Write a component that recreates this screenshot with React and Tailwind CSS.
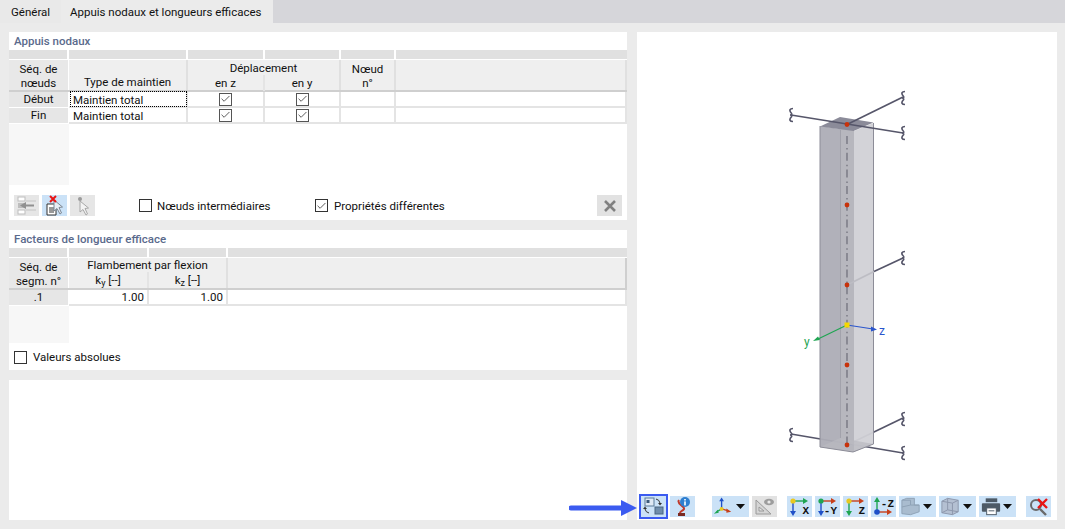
import { Check } from 'lucide-react'

const FONT = 'font-["Roboto",sans-serif]'

const CheckBox = ({ checked, dark }) => (
  <span
    className={`flex items-center justify-center w-[13px] h-[13px] border bg-white ${
      dark ? 'border-[#333333]' : 'border-[#555555]'
    }`}
  >
    {checked && <Check size={12} strokeWidth={1.9} className="text-[#444444]" />}
  </span>
)

const Head = ({ className = '', children }) => (
  <div className={`flex items-end justify-center bg-[#efefef] border-r-2 border-[#e0e0e0] ${className}`}>
    {children}
  </div>
)

const Band = ({ cols }) => (
  <div className="flex h-[9px] mb-px">
    {cols.map((w, i) => (
      <div key={i} style={{ width: w }} className="bg-[#e0e0e0] border-r-2 border-white last:border-r-0 last:flex-1" />
    ))}
  </div>
)

const Cell = ({ className = '', children }) => (
  <div className={`flex items-center border-r-2 border-b-2 border-[#e4e4e4] bg-white ${className}`}>{children}</div>
)

const RowLabel = ({ children }) => (
  <div className="flex items-center justify-center w-[60px] h-[16px] pb-[1px] bg-[#e6e6e6] border-r border-white border-b border-b-white">
    {children}
  </div>
)

const Squiggle = ({ x, y }) => (
  <path
    d={`M${x + 2} ${y - 6.5} c-3.5 0 -3.5 2 -2.5 3.5 c2 2 1.5 3 -0.5 3 c2 0 2.5 1 0.5 3 c-1 1.5 -1 3.5 2.5 3.5`}
    fill="none"
    stroke="#56566a"
    strokeWidth="1.7"
  />
)

const Column = () => (
  <svg viewBox="637 32 420 464" className="w-[420px] h-[464px] block">
    <line x1="847" y1="445" x2="903" y2="418" stroke="#56566a" strokeWidth="1.7" />
    <line x1="791" y1="434" x2="903" y2="453" stroke="#56566a" strokeWidth="1.7" />
    <polygon points="820,126 854,131 854,452 820,447" fill="#adadb6" fillOpacity="0.95" />
    <polygon points="854,131 873.5,123 873.5,444 854,452" fill="#d1d1d6" fillOpacity="0.95" />
    <polygon points="840.5,123 854,125 854,445 840.5,440" fill="#b7b7be" />
    <polygon points="820,447 840,438 873.5,444 853,452" fill="#b9b9c0" opacity="0.7" />
    <path d="M820 126 V447 L853 452 L873.5 444 V123" fill="none" stroke="#8d8d98" strokeWidth="1" />
    <line x1="840.5" y1="130" x2="840.5" y2="438" stroke="#a2a2ab" strokeWidth="1" />
    <polygon points="820,126.5 840,117 873.5,122.5 853.5,131" fill="#8b8b99" />
    <line x1="847" y1="136" x2="847" y2="445" stroke="#85858f" strokeWidth="1.8" strokeDasharray="8 4 1.5 3.2" />
    <line x1="847" y1="124.5" x2="903" y2="97" stroke="#56566a" strokeWidth="1.7" />
    <line x1="791" y1="115" x2="903" y2="133" stroke="#56566a" strokeWidth="1.7" />
    <line x1="847" y1="285" x2="874" y2="271.5" stroke="#bdbdc3" strokeWidth="1.7" />
    <line x1="874" y1="271.5" x2="903" y2="258" stroke="#56566a" strokeWidth="1.7" />
    <Squiggle x={791} y={115} />
    <Squiggle x={903} y={98} />
    <Squiggle x={903} y={133} />
    <Squiggle x={903} y={258} />
    <Squiggle x={791} y={435} />
    <Squiggle x={903} y={419} />
    <Squiggle x={903} y={453} />
    <circle cx="847" cy="124.5" r="2.4" fill="#c8320a" />
    <circle cx="847" cy="205" r="2.4" fill="#c8320a" />
    <circle cx="847" cy="285" r="2.4" fill="#c8320a" />
    <circle cx="847" cy="365" r="2.4" fill="#c8320a" />
    <circle cx="847" cy="445" r="2.4" fill="#c8320a" />
    <line x1="847" y1="325" x2="817" y2="339.5" stroke="#1fa552" strokeWidth="1.2" />
    <polygon points="813,341 818,336.5 820,340" fill="#1fa552" />
    <line x1="847" y1="325" x2="873" y2="329" stroke="#2a55cc" strokeWidth="1.2" />
    <polygon points="877,329.5 871,326.5 871,331.5" fill="#2a55cc" />
    <rect x="844.5" y="322.5" width="5" height="5" fill="#f5d800" />
    <text x="804" y="346" fontSize="12" fill="#1fa552" fontFamily="Roboto, sans-serif">y</text>
    <text x="879" y="335" fontSize="12" fill="#2a55cc" fontFamily="Roboto, sans-serif">z</text>
  </svg>
)

const Caret = () => (
  <svg viewBox="0 0 9 5" className="w-[9px] h-[5px] shrink-0">
    <polygon points="0,0 9,0 4.5,5" fill="#111111" />
  </svg>
)

const ToolButton = ({ w = 'w-[25px]', active, caret, bg = 'bg-[#cbe2f7]', children }) => (
  <div
    className={`flex items-center justify-between h-[21px] ${w} ${bg} ${caret ? 'pr-[4px]' : 'justify-center'} ${
      active ? 'outline-2 outline-[#3b5bf0]' : ''
    }`}
  >
    {children}
    {caret && <Caret />}
  </div>
)

const AxisIcon = ({ label, dot, down, right, downColor = '#1f50c8' }) => (
  <svg viewBox="0 0 25 21" className="w-[25px] h-[21px]">
    <line x1="6" y1="5" x2="6" y2="16" stroke={downColor} strokeWidth="1.4" />
    <polygon points={down ? '3,15 9,15 6,20' : '3,5 9,5 6,0'} fill={downColor} />
    <line x1="6" y1="5" x2="17" y2="5" stroke={right} strokeWidth="1.4" />
    <polygon points="16,2 21,5 16,8" fill={right} />
    <circle cx="6" cy="5" r="2.6" fill={dot} />
    <text x="22" y="18" textAnchor="end" fontSize="11" fontWeight="700" fill="#111111" fontFamily="Liberation Mono, monospace">
      {label}
    </text>
  </svg>
)

const Toolbar = () => (
  <div className="flex h-[21px] pl-[4px] items-start">
    <ToolButton w="w-[25px]" active>
      <svg viewBox="0 0 25 21" className="w-[25px] h-[21px]">
        <rect x="4" y="2" width="9" height="8" fill="#dfe9f4" stroke="#5b7a99" />
        <rect x="5.5" y="4" width="3" height="3" fill="#39597a" />
        <rect x="14" y="11" width="8" height="7" fill="#6f8dab" stroke="#4a6682" />
        <path d="M15 3 a5 5 0 0 1 4 4 M8 17 a5 5 0 0 1 -4 -4" fill="none" stroke="#333333" />
        <polygon points="17,7 21,7 19,9.5" fill="#333333" />
        <polygon points="2,13 6,13 4,10.5" fill="#333333" />
      </svg>
    </ToolButton>
    <div className="w-[4px]" />
    <ToolButton>
      <svg viewBox="0 0 25 21" className="w-[25px] h-[21px]">
        <path d="M9 4 C6 8 15 10 14 13 C13 15 10 15 10 17" fill="none" stroke="#c0392b" strokeWidth="2" />
        <rect x="8" y="17" width="7" height="3" fill="#7a2a22" />
        <circle cx="15" cy="6" r="5" fill="#2f7fd0" />
        <rect x="14.2" y="3" width="1.6" height="1.5" fill="white" />
        <rect x="14.2" y="5.4" width="1.6" height="4" fill="white" />
      </svg>
    </ToolButton>
    <div className="w-[17px]" />
    <ToolButton w="w-[37px]" caret>
      <svg viewBox="0 0 25 21" className="w-[25px] h-[21px]">
        <line x1="10" y1="13" x2="10" y2="4" stroke="#1f50c8" strokeWidth="1.4" />
        <polygon points="7.5,5 12.5,5 10,1" fill="#1f50c8" />
        <line x1="10" y1="13" x2="5" y2="16" stroke="#1fa552" strokeWidth="1.4" />
        <polygon points="2,18 6,14 7,17" fill="#1fa552" />
        <line x1="10" y1="13" x2="17" y2="15" stroke="#c8401a" strokeWidth="1.4" />
        <polygon points="20,16 15,12.5 15,17" fill="#c8401a" />
        <circle cx="10" cy="13" r="2" fill="#e8c820" />
      </svg>
    </ToolButton>
    <div className="w-[3px]" />
    <ToolButton bg="bg-[#e2e2e2]">
      <svg viewBox="0 0 25 21" className="w-[25px] h-[21px]">
        <path d="M4 4 V18 H19 Z M7 11 V15 H12 Z" fill="#d5d5d5" stroke="#9a9a9a" fillRule="evenodd" />
        <ellipse cx="17" cy="6" rx="5" ry="3.2" fill="#9d9d9d" />
        <circle cx="17" cy="6" r="1.6" fill="#e8e8e8" />
      </svg>
    </ToolButton>
    <div className="w-[10px]" />
    <ToolButton>
      <AxisIcon label="X" dot="#e8c820" down right="#1fa552" />
    </ToolButton>
    <div className="w-[3px]" />
    <ToolButton>
      <AxisIcon label="-Y" dot="#1fa552" down right="#c8401a" />
    </ToolButton>
    <div className="w-[3px]" />
    <ToolButton>
      <AxisIcon label="Z" dot="#e8c820" down right="#c8401a" downColor="#1fa552" />
    </ToolButton>
    <div className="w-[3px]" />
    <ToolButton>
      <svg viewBox="0 0 25 21" className="w-[25px] h-[21px]">
        <line x1="6" y1="16" x2="6" y2="5" stroke="#1fa552" strokeWidth="1.4" />
        <polygon points="3,6 9,6 6,1" fill="#1fa552" />
        <line x1="6" y1="16" x2="17" y2="16" stroke="#c8401a" strokeWidth="1.4" />
        <polygon points="16,13 21,16 16,19" fill="#c8401a" />
        <circle cx="6" cy="16" r="2.8" fill="#1f50c8" />
        <text x="23" y="11" textAnchor="end" fontSize="11" fontWeight="700" fill="#111111" fontFamily="Liberation Mono, monospace">
          -Z
        </text>
      </svg>
    </ToolButton>
    <div className="w-[3px]" />
    <ToolButton w="w-[37px]" caret>
      <svg viewBox="0 0 25 21" className="w-[25px] h-[21px]">
        <path d="M3 4 L8 2 H16 V9 L21 9 V16 L12 19 L3 18 Z" fill="#a9bccf" stroke="#8ea2b6" />
        <path d="M3 4 H12 V9 H21 M12 9 L3 11" fill="none" stroke="#8ea2b6" />
      </svg>
    </ToolButton>
    <div className="w-[3px]" />
    <ToolButton w="w-[37px]" caret>
      <svg viewBox="0 0 25 21" className="w-[25px] h-[21px]">
        <polygon points="3,5 9,2 20,4 20,16 14,19 3,17" fill="#b4c0d2" stroke="#8c96ab" />
        <path d="M3 5 L14 7 V19 M14 7 L20 4 M9 2 V14 L3 17 M9 14 L20 16" fill="none" stroke="#8c96ab" />
      </svg>
    </ToolButton>
    <div className="w-[3px]" />
    <ToolButton w="w-[37px]" caret>
      <svg viewBox="0 0 25 21" className="w-[25px] h-[21px]">
        <rect x="7" y="2" width="12" height="4" fill="#4d5a66" />
        <rect x="3" y="7" width="19" height="9" rx="1" fill="#4d5a66" />
        <rect x="8" y="12" width="10" height="7" fill="white" stroke="#4d5a66" />
        <line x1="10" y1="15" x2="16" y2="15" stroke="#4d5a66" />
      </svg>
    </ToolButton>
    <div className="w-[10px]" />
    <ToolButton>
      <svg viewBox="0 0 25 21" className="w-[25px] h-[21px]">
        <circle cx="10" cy="9" r="5" fill="none" stroke="#6a6a6a" strokeWidth="2" />
        <line x1="14" y1="13" x2="20" y2="19" stroke="#6a6a6a" strokeWidth="2.4" />
        <path d="M12 3 L21 12 M21 3 L12 12" stroke="#e81515" strokeWidth="2.4" />
      </svg>
    </ToolButton>
  </div>
)

const SmallButton = ({ active, children }) => (
  <div className={`w-[25px] h-[21px] ${active ? 'bg-[#cbe2f7]' : 'bg-[#e6e6e6]'}`}>{children}</div>
)

export default function App() {
  return (
    <div className={`relative w-[1065px] h-[529px] overflow-hidden bg-[#ebebeb] text-[11.5px] leading-[16px] text-[#111111] ${FONT}`}>
      {/* tabs */}
      <div className="flex h-[23px] bg-[#d6d6da]">
        <div className="flex items-center w-[61px] h-[23px] pl-[11px] bg-[#e9e9e9]">Général</div>
        <div className="flex items-center w-[212px] h-[23px] pl-[9px] bg-[#ebebeb] whitespace-nowrap">
          Appuis nodaux et longueurs efficaces
        </div>
      </div>

      <div className="flex gap-[10px] pl-[9px] pt-[9px]">
        <div className="flex flex-col gap-[10px] w-[618px]">
          {/* Appuis nodaux */}
          <section className="flex flex-col h-[188px] bg-white">
            <h2 className="h-[18px] pl-[5px] font-medium text-[#5a6a8c] leading-[18px]">Appuis nodaux</h2>
            <Band cols={[60, 119, 77, 76, 55, 231]} />
            <div className="flex h-[32px] border-b-2 border-[#cfcfcf]">
              <div className="flex flex-col items-center justify-end w-[60px] bg-[#e8e8e8] border-r border-white leading-[14px]">
                <span>Séq. de</span>
                <span>nœuds</span>
              </div>
              <Head className="w-[119px]">Type de maintien</Head>
              <div className="flex flex-col w-[153px] bg-[#efefef] border-r-2 border-[#e0e0e0]">
                <div className="h-[15px] text-center">Déplacement</div>
                <div className="flex flex-1">
                  <div className="w-[77px] text-center border-r-2 border-[#e4e4e4]">en z</div>
                  <div className="flex-1 text-center">en y</div>
                </div>
              </div>
              <div className="flex flex-col items-center justify-end w-[55px] bg-[#efefef] border-r-2 border-[#e0e0e0] leading-[14px]">
                <span>Nœud</span>
                <span>n°</span>
              </div>
              <div className="flex-1 bg-[#efefef] border-r-2 border-[#e0e0e0]" />
            </div>
            {[
              ['Début', true],
              ['Fin', false],
            ].map(([label, focus]) => (
              <div key={label} className="flex h-[16px]">
                <RowLabel>{label}</RowLabel>
                <Cell className="w-[119px] pl-[2px]">
                  <span className={`flex items-center w-[115px] h-[14px] pl-[2px] pt-px ${focus ? 'outline-1 outline-dotted outline-black' : ''}`}>
                    Maintien total
                  </span>
                </Cell>
                <Cell className="w-[77px] justify-center">
                  <CheckBox checked />
                </Cell>
                <Cell className="w-[76px] justify-center">
                  <CheckBox checked />
                </Cell>
                <Cell className="w-[55px]" />
                <Cell className="flex-1" />
              </div>
            ))}
            <div className="w-[60px] h-[61px] bg-[#f7f7f7]" />
            <div className="flex items-center h-[21px] mt-[10px] pl-[5px] pr-[5px]">
              <div className="flex gap-[3px]">
                <SmallButton>
                  <svg viewBox="0 0 25 21" className="w-[25px] h-[21px]">
                    <rect x="4" y="2" width="7" height="4" fill="white" stroke="#bdbdbd" />
                    <rect x="4" y="8" width="7" height="5" fill="#bdbdbd" />
                    <rect x="4" y="15" width="7" height="4" fill="white" stroke="#bdbdbd" />
                    <path d="M12 6 H22 M12 15 H22" stroke="#c4c4c4" />
                    <path d="M20 10.5 H10" stroke="#909090" strokeWidth="2" />
                    <polygon points="6,10.5 12,7 12,14" fill="#909090" />
                  </svg>
                </SmallButton>
                <SmallButton active>
                  <svg viewBox="0 0 25 21" className="w-[25px] h-[21px]">
                    <path d="M5 9 H12 L14 11 V20 H5 Z" fill="white" stroke="#333333" />
                    <path d="M7 13 H12 M7 15 H12 M7 17 H12" stroke="#333333" />
                    <path d="M12 5 V16 L15 13.5 L18 19 L19.5 18 L17 12.5 L20.5 12 Z" fill="#e8eef5" stroke="#7b8794" />
                    <path d="M8 1 L14 7 M14 1 L8 7" stroke="#e81515" strokeWidth="2" />
                  </svg>
                </SmallButton>
                <SmallButton>
                  <svg viewBox="0 0 25 21" className="w-[25px] h-[21px]">
                    <circle cx="10" cy="4" r="2" fill="#9a9a9a" />
                    <path d="M10 6 V17 L13 14.5 L16 20 L17.5 19 L15 13.5 L18.5 13 Z" fill="#f3f3f3" stroke="#a8a8a8" />
                  </svg>
                </SmallButton>
              </div>
              <div className="flex items-center gap-[5px] w-[176px] ml-[44px]">
                <CheckBox dark />
                <span>Nœuds intermédiaires</span>
              </div>
              <div className="flex items-center gap-[6px]">
                <CheckBox dark checked />
                <span>Propriétés différentes</span>
              </div>
              <div className="flex items-center justify-center w-[25px] h-[21px] ml-auto bg-[#e2e2e2]">
                <svg viewBox="0 0 14 12" className="w-[14px] h-[12px]">
                  <path d="M2 1 L12 11 M12 1 L2 11" stroke="#808080" strokeWidth="2.6" />
                </svg>
              </div>
            </div>
          </section>

          {/* Facteurs de longueur efficace */}
          <section className="flex flex-col h-[140px] bg-white">
            <h2 className="h-[18px] pl-[5px] font-medium text-[#5a6a8c] leading-[18px]">Facteurs de longueur efficace</h2>
            <Band cols={[60, 80, 79, 399]} />
            <div className="flex h-[32px] border-b-2 border-[#cfcfcf]">
              <div className="flex flex-col items-center justify-end w-[60px] bg-[#e8e8e8] border-r border-white leading-[14px]">
                <span>Séq. de</span>
                <span>segm. n°</span>
              </div>
              <div className="flex flex-col w-[159px] bg-[#efefef] border-r-2 border-[#e0e0e0]">
                <div className="h-[14px] leading-[14px] text-center">Flambement par flexion</div>
                <div className="flex flex-1">
                  <div className="w-[80px] text-center border-r-2 border-[#e4e4e4]">
                    k<sub className="text-[9px] align-baseline relative top-[2px]">y</sub> [--]
                  </div>
                  <div className="flex-1 text-center">
                    k<sub className="text-[9px] align-baseline relative top-[2px]">z</sub> [--]
                  </div>
                </div>
              </div>
              <div className="flex-1 bg-[#efefef] border-r-2 border-[#cfcfcf]" />
            </div>
            <div className="flex h-[16px]">
              <RowLabel>.1</RowLabel>
              <Cell className="w-[80px] justify-end pr-[3px]">1.00</Cell>
              <Cell className="w-[79px] justify-end pr-[3px]">1.00</Cell>
              <Cell className="flex-1" />
            </div>
            <div className="w-[60px] h-[37px] bg-[#f7f7f7]" />
            <div className="flex items-center gap-[6px] h-[14px] mt-[7px] pl-[5px]">
              <CheckBox dark />
              <span>Valeurs absolues</span>
            </div>
          </section>

          <section className="h-[140px] bg-white" />
        </div>

        {/* graphic */}
        <div className="flex flex-col w-[420px] h-[488px] bg-white">
          <Column />
          <Toolbar />
        </div>
      </div>

      {/* callout arrow over the toolbar */}
      <svg viewBox="0 0 70 16" className="absolute left-[569px] top-[500px] w-[70px] h-[16px]">
        <line x1="2" y1="8" x2="54" y2="8" stroke="#3b5bf0" strokeWidth="5" strokeLinecap="round" />
        <polygon points="52,0 68,8 52,16" fill="#3b5bf0" />
      </svg>
    </div>
  )
}
